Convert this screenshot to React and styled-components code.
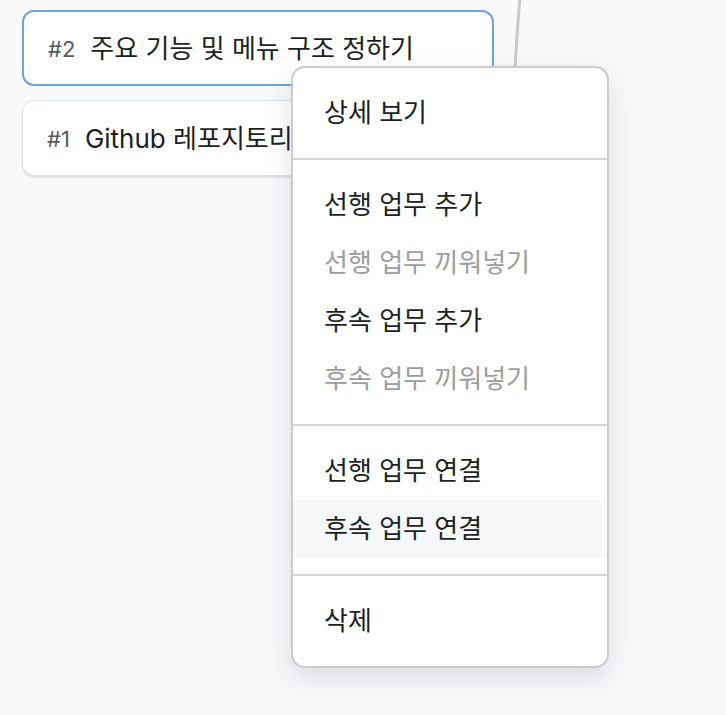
import styled, { createGlobalStyle } from "styled-components";

const GlobalStyle = createGlobalStyle`
  html, body {
    margin: 0;
    padding: 0;
    background: #f8f9fb;
  }
  body {
    font-family: Inter, "Noto Sans CJK KR", sans-serif;
    -webkit-font-smoothing: antialiased;
  }
`;

const Canvas = styled.div`
  position: relative;
  width: 726px;
  height: 715px;
  overflow: hidden;
  background: #f8f9fb;
`;

const Edge = styled.svg`
  position: absolute;
  left: 0;
  top: 0;
  pointer-events: none;
`;

const NodeList = styled.div`
  display: flex;
  flex-direction: column;
  gap: 14px;
  padding: 10px 0 0 22px;
  width: 472px;
`;

const Node = styled.div`
  height: 76px;
  box-sizing: border-box;
  display: flex;
  align-items: center;
  gap: 15px;
  padding: 1px 24px 0;
  background: #fff;
  border-radius: 12px;
  border: ${(p) => (p.$selected ? "2px solid #72a0e6" : "1px solid #dde0e5")};
  box-shadow: ${(p) => (p.$selected ? "none" : "0 2px 2px rgba(60, 70, 90, 0.12)")};
  white-space: nowrap;
  overflow: hidden;
  line-height: 1;
`;

const NodeId = styled.span`
  font-size: 22px;
  color: #555a60;
`;

const NodeTitle = styled.span`
  font-size: 26px;
  color: #1c1f23;
`;

const Menu = styled.div`
  position: absolute;
  left: 291px;
  top: 66px;
  width: 318px;
  box-sizing: border-box;
  background: #fff;
  border: 2px solid #cbcbcb;
  border-radius: 14px;
  box-shadow: 0 10px 28px rgba(40, 45, 60, 0.14);
  overflow: hidden;
`;

const Section = styled.div`
  padding: 16px 0;
  & + & {
    border-top: 2px solid #d6d6d6;
  }
`;

const Item = styled.div`
  height: 58px;
  display: flex;
  align-items: center;
  padding: 0 31px;
  font-size: 26px;
  line-height: 1;
  color: ${(p) => (p.$disabled ? "#9b9da0" : "#1c1f23")};
  background: ${(p) => (p.$hover ? "#f6f7f9" : "transparent")};
  white-space: nowrap;
`;

const sections = [
  [{ label: "상세 보기" }],
  [
    { label: "선행 업무 추가" },
    { label: "선행 업무 끼워넣기", disabled: true },
    { label: "후속 업무 추가" },
    { label: "후속 업무 끼워넣기", disabled: true },
  ],
  [{ label: "선행 업무 연결" }, { label: "후속 업무 연결", hover: true }],
  [{ label: "삭제" }],
];

export default function App() {
  return (
    <>
      <GlobalStyle />
      <Canvas>
        <Edge width="726" height="715">
          <path d="M520 -2 C517 30 515 60 513 120" stroke="#cacaca" strokeWidth="3" fill="none" />
        </Edge>
        <NodeList>
          <Node $selected>
            <NodeId>#2</NodeId>
            <NodeTitle>주요 기능 및 메뉴 구조 정하기</NodeTitle>
          </Node>
          <Node>
            <NodeId>#1</NodeId>
            <NodeTitle>Github 레포지토리 생성하기</NodeTitle>
          </Node>
        </NodeList>
        <Menu>
          {sections.map((items, i) => (
            <Section key={i}>
              {items.map((it) => (
                <Item key={it.label} $disabled={it.disabled} $hover={it.hover}>
                  {it.label}
                </Item>
              ))}
            </Section>
          ))}
        </Menu>
      </Canvas>
    </>
  );
}
